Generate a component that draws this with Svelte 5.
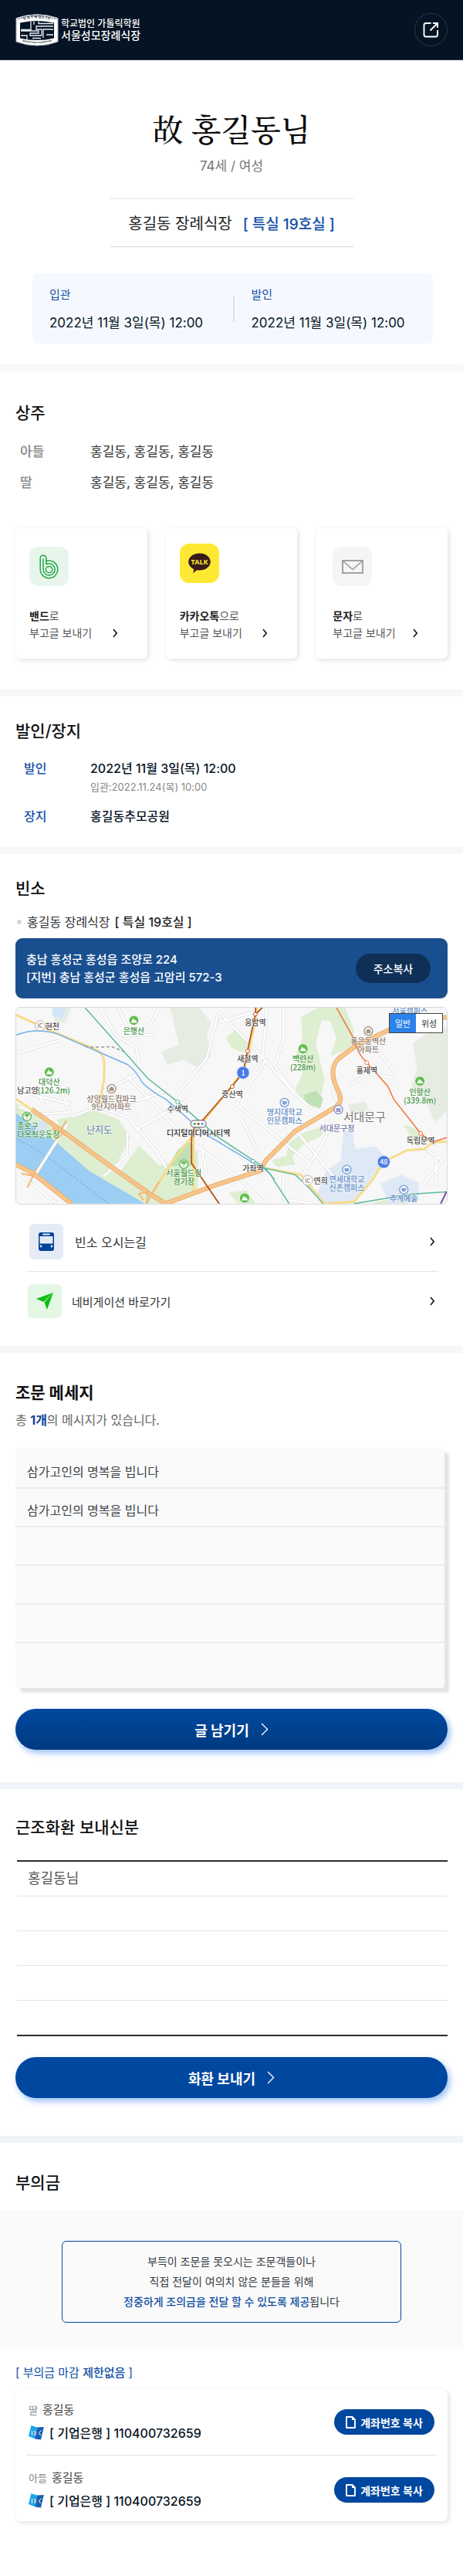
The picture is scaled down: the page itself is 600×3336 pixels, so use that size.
<script>
  const mourners = [
    { role: '아들', names: '홍길동, 홍길동, 홍길동' },
    { role: '딸', names: '홍길동, 홍길동, 홍길동' }
  ];
  const messages = ['삼가고인의 명복을 빕니다', '삼가고인의 명복을 빕니다', '', '', '', ''];
  const wreaths = ['홍길동님', '', '', '', ''];
  const accounts = [
    { role: '딸', name: '홍길동', bank: '기업은행', number: '110400732659' },
    { role: '아들', name: '홍길동', bank: '기업은행', number: '110400732659' }
  ];

  let mapType = $state('일반');

  const mapLabels = [
    { x: 47, y: 24, t: '현천', k: 'dark' },
    { x: 153, y: 30, t: '은행산', k: 'green' },
    { x: 311, y: 19, t: '응암역', k: 'dark' },
    { x: 301, y: 66, t: '새절역', k: 'dark' },
    { x: 281, y: 112, t: '증산역', k: 'dark' },
    { x: 373, y: 66, t: '백련산', k: 'green' },
    { x: 373, y: 77, t: '(228m)', k: 'green' },
    { x: 458, y: 43, t: '홍은동벽산', k: 'brown' },
    { x: 458, y: 54, t: '아파트', k: 'brown' },
    { x: 456, y: 81, t: '홍제역', k: 'dark' },
    { x: 525, y: 109, t: '인왕산', k: 'green' },
    { x: 525, y: 120, t: '(339.8m)', k: 'green' },
    { x: 43, y: 96, t: '대덕산', k: 'green' },
    { x: 49, y: 107, t: '(126.2m)', k: 'green' },
    { x: 15, y: 107, t: '남고양', k: 'dark' },
    { x: 124, y: 118, t: '상암월드컵파크', k: 'brown' },
    { x: 124, y: 129, t: '9단지아파트', k: 'brown' },
    { x: 210, y: 132, t: '수색역', k: 'dark' },
    { x: 237, y: 163, t: '디지털미디어시티역', k: 'black' },
    { x: 349, y: 136, t: '명지대학교', k: 'blue' },
    { x: 349, y: 147, t: '인문캠퍼스', k: 'blue' },
    { x: 453, y: 142, t: '서대문구', k: 'district' },
    { x: 417, y: 157, t: '서대문구청', k: 'violet' },
    { x: 108, y: 159, t: '난지도', k: 'island' },
    { x: 15, y: 154, t: '종로구', k: 'green' },
    { x: 29, y: 165, t: '다목적운동장', k: 'green' },
    { x: 218, y: 215, t: '서울월드컵', k: 'green' },
    { x: 218, y: 226, t: '경기장', k: 'green' },
    { x: 308, y: 209, t: '가좌역', k: 'dark' },
    { x: 396, y: 225, t: '연희', k: 'dark' },
    { x: 430, y: 223, t: '연세대학교', k: 'blue' },
    { x: 430, y: 234, t: '신촌캠퍼스', k: 'blue' },
    { x: 526, y: 173, t: '독립문역', k: 'dark' },
    { x: 504, y: 248, t: '추계예술', k: 'blue' },
    { x: 512, y: 4, t: '서울캠퍼스', k: 'blue' }
  ];
  const peaks = [[153, 17], [373, 54], [525, 96], [43, 84], [297, 248]];
  const parks = [[14, 142], [218, 204]];
  const schools = [[349, 124], [430, 211], [504, 237]];
  const homes = [[458, 31], [124, 106]];
  const stations = [
    [311, 9, '#b5551d'], [301, 57, '#b5551d'], [281, 103, '#b5551d'],
    [210, 123, '#58b795'], [308, 200, '#58b795'],
    [456, 72, '#f2733a'], [526, 164, '#f2733a']
  ];
</script>

{#snippet chevron()}
  <svg class="chev" width="7" height="12" viewBox="0 0 7 12" aria-hidden="true">
    <path d="M1 1 L5.2 6 L1 11" fill="none" stroke="#111" stroke-width="1.6" />
  </svg>
{/snippet}

{#snippet thinChevron()}
  <svg width="10" height="17" viewBox="0 0 10 17" aria-hidden="true">
    <path d="M1 1 L8.6 8.5 L1 16" fill="none" stroke="#fff" stroke-width="1.3" />
  </svg>
{/snippet}

<div class="page">
  <header class="top">
    <a class="brand" href="#home">
      <svg width="56" height="42" viewBox="0 0 56 42" aria-hidden="true">
        <defs>
          <path id="arcTop" d="M8 8.3 Q28 2.6 48 8.3" />
          <path id="arcBottom" d="M5.5 34.6 Q28 41.4 50.5 34.6" />
        </defs>
        <path d="M1 5.5 Q28 -4 55 5.5 V36 Q28 46 1 36 Z" fill="#fff" stroke="#aab3bd" stroke-width="1" />
        <path d="M2.5 6.8 Q28 -2 53.5 6.8" fill="none" stroke="#051424" stroke-width=".5" />
        <path d="M6 11.5 Q28 6.5 50 11.5 V31.5 Q28 36.5 6 31.5 Z" fill="#051424" />
        <path d="M20 10 V20.5 H7 M30 9.5 V12.5 H49 M49 16 H27 V20 H34 V28 H19 V25 H30 V22 H7 M24 10 V14 M7 28 H15 V33 M36 31 V20 H49 M40 27 H49 M22 31.5 H33" fill="none" stroke="#e9edf1" stroke-width="1.3" />
        <text class="seal"><textPath href="#arcTop" startOffset="50%" text-anchor="middle">C A T H O L I C</textPath></text>
        <text class="seal small"><textPath href="#arcBottom" startOffset="50%" text-anchor="middle">EDUCATION FOUNDATION</textPath></text>
      </svg>
      <span class="brand-text"><span class="l1">학교법인 가톨릭학원</span><span class="l2">서울성모장례식장</span></span>
    </a>
    <button class="share" aria-label="공유">
      <svg width="21" height="21" viewBox="0 0 21 21" aria-hidden="true">
        <path d="M10.5 2 H4 Q1.5 2 1.5 4.5 V17 Q1.5 19.5 4 19.5 H16.5 Q19 19.5 19 17 V11" fill="none" stroke="#fff" stroke-width="1.9" />
        <path d="M9.5 11.5 L18 3 M13 2 H19 V8" fill="none" stroke="#fff" stroke-width="1.9" />
      </svg>
    </button>
  </header>

  <main>
    <section class="hero">
      <h1>故 홍길동님</h1>
      <p class="age">74세 / 여성</p>
      <p class="room"><span>홍길동 장례식장</span><strong>[ 특실 19호실 ]</strong></p>
      <dl class="schedule">
        <div><dt>입관</dt><dd>2022년 11월 3일(목) 12:00</dd></div>
        <div><dt>발인</dt><dd>2022년 11월 3일(목) 12:00</dd></div>
      </dl>
    </section>

    <section class="family">
      <h2>상주</h2>
      <dl class="mourners">
        {#each mourners as m}
          <div><dt>{m.role}</dt><dd>{m.names}</dd></div>
        {/each}
      </dl>
      <div class="cards">
        <a class="card" href="#band">
          <span class="ico band">
            <svg width="25" height="32" viewBox="0 0 25 32" aria-hidden="true">
              <g fill="none" stroke="#1fa64a" stroke-width="1.5">
                <path d="M1.2 19.5 V5 A3.8 3.8 0 0 1 8.800 5 V8.700 A11.300 11.300 0 1 1 1.200 19.500 Z" />
                <path d="M8.800 8.500 V13" />
                <path d="M5 19.500 V5.500 M5 19.500 A7.600 7.600 0 1 0 8.800 12.800" />
                <circle cx="12.600" cy="19.600" r="4.200" />
              </g>
            </svg>
          </span>
          <span class="copy"><b>밴드</b>로<br />부고글 보내기</span>
          {@render chevron()}
        </a>
        <a class="card kakao-card" href="#kakao">
          <span class="ico kakao">
            <svg width="29" height="27" viewBox="0 0 29 27" aria-hidden="true">
              <path d="M14.5 .5 C22.5 .5 28.8 5.3 28.8 11.5 C28.8 17.7 22.5 22.5 14.5 22.5 C13.3 22.5 12.2 22.4 11.2 22.2 L6.2 26.3 L7.2 21 C3 19 .2 15.5 .2 11.5 C.2 5.3 6.5 .5 14.5 .5 Z" fill="#391b1b" />
              <text x="14.5" y="15" text-anchor="middle" class="talk">TALK</text>
            </svg>
          </span>
          <span class="copy"><b>카카오톡</b>으로<br />부고글 보내기</span>
          {@render chevron()}
        </a>
        <a class="card sms-card" href="#sms">
          <span class="ico sms">
            <svg width="28" height="18" viewBox="0 0 28 18" aria-hidden="true">
              <rect x="1" y="1" width="26" height="16" fill="none" stroke="#999" stroke-width="1.8" />
              <path d="M2 2 L14 12.5 L26 2" fill="none" stroke="#999" stroke-width="1.5" />
            </svg>
          </span>
          <span class="copy"><b>문자</b>로<br />부고글 보내기</span>
          {@render chevron()}
        </a>
      </div>
    </section>

    <section class="burial">
      <h2>발인/장지</h2>
      <dl>
        <div><dt>발인</dt><dd>2022년 11월 3일(목) 12:00<small>입관:2022.11.24(목) 10:00</small></dd></div>
        <div><dt>장지</dt><dd>홍길동추모공원</dd></div>
      </dl>
    </section>

    <section class="place">
      <h2>빈소</h2>
      <p class="where"><i></i><span>홍길동 장례식장</span><b>[ 특실 19호실 ]</b></p>
      <div class="address">
        <p>충남 홍성군 홍성읍 조양로 224<br />[지번] 충남 홍성군 홍성읍 고암리 572-3</p>
        <button>주소복사</button>
      </div>

      <div class="map">
        <svg viewBox="0 0 560 256" preserveAspectRatio="xMidYMid slice" role="img" aria-label="빈소 지도">
          <rect width="560" height="256" fill="#f7f7f7" />
          <g transform="matrix(.3827 0 0 .3333 -20 -14)">
            <g fill="#e7ece3">
              <path d="M575 42 h100 l40 60 l-15 50 l15 80 l-40 50 l-55 -35 l-55 20 l-20 -50 l60 -30 z" />
              <path d="M1400 180 l80 -60 l35 0 v330 l-40 40 l-30 -80 l-50 -60 l20 -70 z" />
              <path d="M1180 420 l60 -10 l10 30 l-60 20 z M180 42 h60 l-20 60 l-40 0 z" />
            </g>
            <g fill="#ddeed1">
              <path d="M1020 80 l60 -38 h90 l30 90 l-10 70 l-70 30 l20 -70 l-20 -65 l-30 -5 l-20 90 l30 140 l-10 60 l-60 30 l-30 -50 l25 -60 l-20 -80 l20 -60 z" />
              <path d="M765 160 l30 -28 l50 40 l-20 48 l-40 -20 z" />
              <path d="M190 480 L320 445 L400 480 L440 550 L390 660 L330 640 L215 540 Z" />
              <path d="M52 415 L100 445 L215 545 L410 700 L560 808 H480 L300 690 L180 580 L52 460 Z" />
              <path d="M400 690 L470 580 L540 660 L600 640 L670 600 V750 L560 808 L500 760 Z" />
              <path d="M920 640 l50 -20 l10 -50 l50 -40 l70 -25 l-10 40 l-60 30 l-40 50 l10 30 l-60 10 z" />
              <path d="M1370 500 l50 20 l30 40 l-50 10 z M775 765 l60 -10 l30 52 h-60 z M1250 808 l60 -15 l60 -5 l10 20 z" />
            </g>
            <path d="M1030 385 l40 -18 l25 30 l-10 40 l-50 -20 z M600 600 L655 545 V660 L570 662 Z" fill="#bfe0b4" />
            <path d="M1165 525 l30 0 l10 70 l70 -10 l30 40 l-60 110 l-60 75 h-80 l-30 -40 l30 -90 l50 -40 z M1290 730 l70 -35 l60 30 v70 l-100 15 z" fill="#dfe9f5" />
            <path d="M52 455 L180 560 L300 680 L490 808 H240 L52 655 Z" fill="#9ccdf2" />
            <path d="M100 490 l50 -5 l10 60 l-30 5 z M175 42 h50 l-15 45 l-35 -10 z" fill="#d4e6f6" />
            <path d="M52 555 Q100 580 150 620 T300 750 T380 808" fill="none" stroke="#5f8fb8" stroke-dasharray="2 3" vector-effect="non-scaling-stroke" />

            {#each [['#dcdde0', 4], ['#fff', 2.6]] as [color, w]}
              <g class="line" stroke={color} stroke-width={w}>
                <path d="M190 808 L60 690 M120 690 L225 500 M335 42 L390 150 L460 200 L470 260 M400 42 L440 150 L520 150 M540 42 L500 130 M60 220 L200 170 M740 60 L700 240 L600 380 M740 60 L860 200 L1000 380 L1060 440" />
                <path d="M905 42 L890 230 L820 330 M960 42 L960 170 L930 270 L1000 380 M860 60 L740 100 M1130 300 L1130 380 L1150 420" />
                <path d="M240 470 L330 430 L430 470 L520 590 L580 700 M430 310 L560 470 L640 560 L800 700 L900 808 M330 380 L470 300 M400 430 L560 370 M460 520 L640 400 M350 350 L470 480" />
                <path d="M60 430 L130 460 L240 450 M100 380 L240 420 M120 350 L150 440 M200 350 L230 440 M680 570 L700 700 M820 480 L870 600 M700 520 L900 700 M900 250 L800 420 L1050 650 M960 690 L960 790 L1060 808" />
                <path d="M1000 520 L1130 700 M1140 430 L1100 560 L1000 740 M1180 350 L1250 300 L1340 320 M1260 180 L1340 300 M1400 560 L1500 640 L1430 740 M1480 620 V740 M430 530 L430 620 L350 700" />
              </g>
            {/each}
            <g class="line" stroke="#f8dc8c" stroke-width="3">
              <path d="M52 72 L180 138 L320 205 Q352 220 352 270 L350 330 L335 420" />
              <path d="M872 42 L845 210 L825 290 L690 485 L640 560 L570 665 L520 760" />
              <path d="M52 400 L110 445 M655 545 V760 M880 665 L1020 695 L1100 808 L1200 800 L1260 720 L1300 645 L1380 600 L1440 595 L1465 570 L1515 565" />
            </g>
            {#each [['#e3a765', 6], ['#f8c48a', 4.5]] as [color, w]}
              <g class="line" stroke={color} stroke-width={w}>
                <path d="M105 440 L215 530 L340 635 L500 765 L560 808 M52 655 L110 690 L240 808 M560 808 L730 735 L880 680 L900 640 L1000 525 L1140 430 Q1165 405 1145 365 Q1110 280 1150 240 L1210 190 L1320 130 L1515 80" />
              </g>
            {/each}
            <g class="line" stroke="#f2b878" stroke-width="2">
              <path d="M222 485 L185 560 L215 530 L175 515 M125 665 L90 745 L110 700 L70 690 M538 720 L495 808 L500 760 L470 770 L485 795" />
            </g>
            <g class="line" stroke-width="1.5">
              <path d="M52 150 Q120 120 190 145 L430 265 Q460 290 480 335 Q510 370 560 400 L700 540 L860 650 Q910 675 930 715" stroke="#6fb0ea" />
              <path d="M285 42 L500 320 L600 410 L740 550 L860 640 Q910 670 930 720 L980 808 M880 665 L1000 695 Q1050 745 1095 808 M1200 808 L1400 770 L1515 762" stroke="#5dba9a" />
              <path d="M285 195 Q340 200 375 195 L420 215" stroke="#999" stroke-dasharray="4 3" />
              <path d="M890 42 L865 70 M866 42 L865 70 L838 213 L823 297 L786 350 L680 490 Q648 510 648 560 V650 L742 808" stroke="#b5551d" stroke-width="1.8" />
              <path d="M1140 42 L1200 165 Q1210 220 1243 257 L1315 350 L1335 400 L1427 534 L1465 568 L1515 550" stroke="#f2733a" />
              <path d="M1515 760 L1495 808" stroke="#7a4bc0" stroke-width="2" />
            </g>
          </g>

          {#each stations as [x, y, c]}
            <circle cx={x} cy={y} r="2.5" fill="#fff" stroke={c} stroke-width="1" />
          {/each}
          {#each peaks as [x, y]}
            <circle cx={x} cy={y} r="6" fill="#5fbd4f" />
            <path d="M{x - 4} {y + 3} l3 -6 l2 3 l1 -1 l2.5 4 z" fill="#fff" />
          {/each}
          {#each parks as [x, y]}
            <circle cx={x} cy={y} r="5.5" fill="#fff" stroke="#69b95c" stroke-width="1.5" />
            <path d="M{x - 3} {y - 1} a3 2.5 0 0 1 6 0 z M{x} {y - 1} v4" fill="#69b95c" stroke="#69b95c" />
          {/each}
          {#each schools as [x, y]}
            <circle cx={x} cy={y} r="5.5" fill="#fff" stroke="#7da5d8" stroke-width="1.5" />
            <path d="M{x - 3} {y - 2} h6 v3 q-3 4 -6 0 z" fill="#7da5d8" />
          {/each}
          {#each homes as [x, y]}
            <circle cx={x} cy={y} r="5.5" fill="#fff" stroke="#a89585" stroke-width="1.5" />
            <path d="M{x - 3} {y + 3} v-4 l3 -2 l3 2 v4 z" fill="#a89585" />
          {/each}
          <circle cx="419" cy="133" r="5.5" fill="#fff" stroke="#9a9ccd" stroke-width="1.5" />
          <rect x="416" y="131" width="6" height="5" fill="#9a9ccd" />

          {#each mapLabels as l}
            <text x={l.x} y={l.y} class="lab {l.k}">{l.t}</text>
          {/each}

          {#each [[31, 24], [379, 225]] as [x, y]}
            <circle cx={x} cy={y} r="6.5" fill="#fff" stroke="#b9aca0" />
            <text {x} {y} class="lab ic">IC</text>
          {/each}
          <circle cx="295" cy="85" r="8" fill="#4a78e6" stroke="#b6c9f5" />
          <text x="295" y="85" class="lab num">1</text>
          <circle cx="478" cy="201" r="8" fill="#4a78e6" stroke="#b6c9f5" />
          <text x="478" y="201" class="lab num">48</text>
          <rect x="227" y="147" width="20" height="9" rx="4.5" fill="#fff" stroke="#555" />
          <circle cx="232" cy="151.5" r="1.6" fill="#3fae86" />
          <circle cx="237" cy="151.5" r="1.6" fill="#b5551d" />
          <circle cx="242" cy="151.5" r="1.6" fill="#4e9de2" />
        </svg>
        <div class="maptype">
          {#each ['일반', '위성'] as t}
            <button class:on={mapType === t} onclick={() => (mapType = t)}>{t}</button>
          {/each}
        </div>
      </div>

      <nav class="links">
        <a href="#route">
          <span class="tile bus">
            <svg width="20" height="24" viewBox="0 0 20 24" aria-hidden="true">
              <rect x="0" y="0" width="20" height="24" rx="3" fill="#00439a" />
              <rect x="5" y="1.5" width="10" height="2" rx="1" fill="#e4ebf4" />
              <rect x="1.5" y="5" width="17" height="9.5" fill="#e4ebf4" />
              <circle cx="3" cy="18" r="1.4" fill="#e4ebf4" />
              <circle cx="17" cy="18" r="1.4" fill="#e4ebf4" />
            </svg>
          </span>
          <span>빈소 오시는길</span>
          {@render chevron()}
        </a>
        <a class="second" href="#navi">
          <span class="tile nav">
            <svg width="22" height="22" viewBox="0 0 22 22" aria-hidden="true">
              <path d="M22 0 L0 8 L9.5 12 Z" fill="#0cbf12" />
              <path d="M22 0 L10.5 12.5 L14 22 Z" fill="#0cbf12" />
            </svg>
          </span>
          <span>네비게이션 바로가기</span>
          {@render chevron()}
        </a>
      </nav>
    </section>

    <section class="messages">
      <h2>조문 메세지</h2>
      <p class="count">총 <b>1개</b>의 메시지가 있습니다.</p>
      <ul class="notes">
        {#each messages as m}<li>{m}</li>{/each}
      </ul>
      <button class="cta gradient">글 남기기 {@render thinChevron()}</button>
    </section>

    <section class="wreaths">
      <h2>근조화환 보내신분</h2>
      <ul class="senders">
        {#each wreaths as w}<li>{w}</li>{/each}
      </ul>
      <button class="cta">화환 보내기 {@render thinChevron()}</button>
    </section>

    <section class="money">
      <h2>부의금</h2>
      <div class="notice">
        <p>부득이 조문을 못오시는 조문객들이나<br />직접 전달이 여의치 않은 분들을 위해<br /><b>정중하게 조의금을 전달 할 수 있도록 제공</b>됩니다</p>
      </div>
      <p class="deadline">[ 부의금 마감 <b>제한없음</b> ]</p>
      <ul class="accounts">
        {#each accounts as a}
          <li>
            <div class="who">
              <p class="name"><small>{a.role}</small>{a.name}</p>
              <p class="acct">
                <svg width="20" height="19" viewBox="0 0 20 19" aria-hidden="true">
                  <path d="M3.5 0 L11 2.5 L9 17.5 L0 14 Z" fill="#1aa7e8" />
                  <path d="M11 2.5 L19.8 2 L16 18.5 L8.5 17.5 Z" fill="#1660b4" />
                  <path d="M4.5 7 V13" stroke="#fff" stroke-width="1" />
                  <path d="M8 7 Q11.5 10 8 13 Z" fill="#e6452f" stroke="#fff" stroke-width=".8" />
                  <path d="M16.5 6.5 L13.5 9.5 L15.5 13" fill="none" stroke="#fff" stroke-width="1" />
                </svg>
                [ {a.bank} ] {a.number}
              </p>
            </div>
            <button class="copybtn">
              <svg width="13" height="16" viewBox="0 0 13 16" aria-hidden="true">
                <path d="M1 1 H8.5 L12 4.5 V15 H1 Z" fill="none" stroke="#fff" stroke-width="1.9" stroke-linejoin="round" />
                <path d="M8 1 V5 H12 Z" fill="#fff" />
              </svg>
              계좌번호 복사
            </button>
          </li>
        {/each}
      </ul>
    </section>
  </main>
</div>

<style>
  :global(body) { margin: 0; background: #fff; }
  .page {
    font-family: Inter, "Noto Sans CJK KR", sans-serif;
    color: #222;
    font-size: 16px;
  }
  .page :is(h1, h2, p, dl, dd, ul) { margin: 0; padding: 0; }
  ul { list-style: none; }
  a { color: inherit; text-decoration: none; }
  button { font: inherit; border: 0; padding: 0; cursor: pointer; }
  svg { flex: none; }

  .top {
    display: flex;
    justify-content: space-between;
    align-items: center;
    height: 77px;
    padding: 0 20px;
    background: #051424;
    border-bottom: 1px solid #2c3a48;
  }
  .brand { display: flex; align-items: center; gap: 3px; color: #fff; }
  .brand-text { display: flex; flex-direction: column; font-weight: 500; }
  .l1 { font-size: 12px; line-height: 14px; }
  .l2 { font-size: 14px; line-height: 16px; }
  .seal { font: 700 5px "Liberation Sans", sans-serif; fill: #051424; }
  .seal.small { font-size: 3px; }
  .share {
    display: grid;
    place-items: center;
    width: 43px;
    height: 43px;
    border: 1px solid #2c3946;
    border-radius: 50%;
    background: none;
    box-sizing: border-box;
  }

  section { padding: 30px 20px 0; border-bottom: 9px solid #f7f7f7; }
  h2 { font-size: 21px; line-height: 30px; font-weight: 500; color: #111; }

  .hero { padding: 58px 20px 27px; text-align: center; }
  h1 {
    font-family: "Noto Serif CJK KR", "Noto Sans CJK KR", serif;
    font-size: 40px;
    line-height: 60px;
    font-weight: 500;
    color: #0b0b0b;
  }
  .hero .age { margin-top: 7px; font-size: 17px; line-height: 24px; color: #777; }
  .hero .room {
    display: flex;
    justify-content: center;
    align-items: center;
    gap: 14px;
    max-width: 315px;
    height: 61px;
    margin: 30px auto 0;
    border-top: 1px solid #e2e4e7;
    border-bottom: 1px solid #cfd9e6;
    font-size: 20px;
    white-space: nowrap;
  }
  .room strong { font-size: 19px; font-weight: 500; color: #0f4ea3; }
  .hero .schedule {
    display: grid;
    grid-template-columns: 1fr 1fr;
    align-items: center;
    height: 91px;
    margin: 34px 19px 0 22px;
    border-radius: 6px;
    background: #f5f9ff;
    text-align: left;
  }
  .schedule div { padding-left: 22px; }
  .schedule div + div { border-left: 2px solid #d8e2f1; height: 34px; display: flex; flex-direction: column; justify-content: center; }
  .schedule dt { font-size: 15px; line-height: 24px; margin-bottom: 12px; color: #1750a5; }
  .schedule dd { font-size: 17px; line-height: 24px; font-weight: 400; color: #071424; white-space: nowrap; }

  .family { padding-top: 39px; padding-bottom: 40px; }
  .family .mourners { margin-top: 15px; font-size: 17px; line-height: 40px; }
  .mourners div { display: grid; grid-template-columns: 91px 1fr; padding-left: 6px; }
  .mourners dt { color: #888; font-weight: 500; }
  .mourners dd { color: #333; }
  .cards { display: grid; grid-template-columns: repeat(3, 1fr); gap: 24px; margin-top: 39px; }
  .card {
    display: grid;
    grid-template-columns: 1fr auto;
    grid-template-rows: auto 1fr;
    height: 169px;
    padding: 24px 38px 22px 18px;
    box-sizing: border-box;
    border-radius: 6px;
    background: #fff;
    box-shadow: 2px 2px 6px rgba(0, 0, 0, .12);
  }
  .kakao-card { padding-top: 20px; }
  .sms-card { padding-left: 22px; }
  .ico {
    display: grid;
    place-items: center;
    grid-column: 1 / -1;
    width: 51px;
    height: 51px;
    border-radius: 12px;
  }
  .band { background: #e8f5eb; }
  .kakao { background: #fde933; }
  .sms { background: #f5f5f5; }
  .talk { font: 700 9px "Noto Sans", sans-serif; fill: #fde933; }
  .copy { align-self: end; font-size: 14px; line-height: 22px; color: #555; white-space: nowrap; }
  .copy b { color: #222; font-weight: 700; }
  .card .chev { align-self: end; margin-bottom: 5px; }

  .burial { padding-bottom: 27px; }
  .burial dl { display: grid; gap: 14px; margin-top: 20px; line-height: 26px; font-size: 16px; font-weight: 500; }
  .burial dl div { display: grid; grid-template-columns: 86px 1fr; padding-left: 11px; }
  .burial dt { color: #1750a5; }
  .burial dd { color: #071424; }
  .burial small { display: block; font-size: 13px; line-height: 22px; font-weight: 400; color: #888; }

  .place { padding-bottom: 36px; }
  .place .where { display: flex; align-items: center; margin-top: 15px; line-height: 26px; color: #333; }
  .where i { width: 6px; height: 6px; margin: 0 7px 0 2px; border-radius: 50%; background: #d5d5d5; }
  .where b { margin-left: 6px; font-weight: 500; color: #222; }
  .address {
    display: flex;
    justify-content: space-between;
    align-items: center;
    height: 78px;
    margin-top: 8px;
    padding: 0 22px 0 14px;
    border-radius: 9px;
    background: #1a4f8f;
    color: #fff;
  }
  .address p { font-size: 15px; line-height: 23px; font-weight: 500; }
  .address button { width: 97px; height: 38px; border-radius: 19px; background: #0f2f57; color: #fff; font-size: 14px; font-weight: 500; }

  .map {
    position: relative;
    height: 254px;
    margin-top: 11px;
    border: 1px solid #d9d9d9;
    border-radius: 6px;
    overflow: hidden;
  }
  .map svg { display: block; width: 100%; height: 100%; }
  .line path { fill: none; vector-effect: non-scaling-stroke; }
  .lab {
    font-family: "Noto Sans CJK KR", sans-serif;
    font-size: 10px;
    font-weight: 500;
    text-anchor: middle;
    dominant-baseline: central;
    paint-order: stroke;
    stroke: rgba(255, 255, 255, .8);
    stroke-width: 1px;
  }
  .dark { fill: #4a4542; }
  .black { fill: #222; }
  .green { fill: #3f9440; }
  .brown { fill: #8c7766; }
  .blue { fill: #5f8ac4; }
  .violet { fill: #6f74a8; }
  .island { fill: #6f8fb3; font-size: 12px; }
  .district { fill: #777; font-size: 15px; font-weight: 400; }
  .ic { fill: #7b6a5c; font-size: 7px; }
  .num { fill: #fff; stroke: none; font-size: 9px; }
  .maptype {
    position: absolute;
    top: 7px;
    right: 5px;
    display: grid;
    grid-template-columns: 1fr 1fr;
    width: 68px;
    height: 24px;
    border: 1px solid #444;
  }
  .maptype button { background: #fff; color: #333; font-size: 11px; }
  .maptype button.on { background: #2b82ea; color: #fff; }

  .links a { display: flex; align-items: center; margin: 0 12px 0 14px; padding: 25px 4px 15px 4px; border-bottom: 1px solid #e4e4e6; color: #333; }
  .links .second { padding: 16px 4px 0 2px; border-bottom: 0; font-size: 15px; }
  .links .chev { margin-left: auto; }
  .tile { display: grid; place-items: center; width: 44px; height: 46px; margin-right: 15px; border-radius: 6px; }
  .bus { background: #e4ebf4; }
  .nav { height: 44px; margin-right: 13px; background: #e3f7e4; }

  .messages { padding-top: 37px; padding-bottom: 42px; border-color: #f0f4f8; }
  .messages h2 { font-weight: 700; }
  .messages .count { margin-top: 8px; line-height: 24px; color: #666; }
  .count b { color: #0d429c; font-weight: 700; }
  .messages .notes {
    margin: 24px 4px 27px 0;
    padding-top: 3px;
    border-radius: 4px;
    background: #f9fafc;
    box-shadow: 6px 6px 3px #e5e5e5;
    color: #444;
  }
  .notes li { height: 48px; padding: 0 15px; line-height: 56px; border-bottom: 2px solid #ebedef; }
  .notes li:last-child { height: 58px; border: 0; }

  .cta {
    display: flex;
    justify-content: center;
    align-items: center;
    gap: 15px;
    width: 100%;
    height: 53px;
    border-radius: 27px;
    background: #00479f;
    color: #fff;
    font-size: 18px;
    font-weight: 700;
    box-shadow: 3px 4px 9px rgba(0, 98, 230, .42);
  }
  .gradient { background: linear-gradient(#0049a0, #003a80); }

  .wreaths { padding-top: 35px; padding-bottom: 49px; border-color: #f0f4f8; }
  .wreaths .senders { margin: 27px 0; padding: 0 0 0 2px; }
  .senders li { height: 44px; padding-left: 14px; border-bottom: 1px solid #e4e4e4; font-size: 18px; line-height: 43px; color: #555; }
  .senders li:first-child { border-top: 2px solid #2c2c2c; }
  .senders li:last-child { border-bottom: 2px solid #2c2c2c; }

  .money { padding: 37px 0 70px; border: 0; }
  .money h2 { padding: 0 20px; }
  .notice { margin-top: 20px; padding: 40px 80px 33px; background: #fafafa; }
  .notice p {
    padding: 13px 0;
    border: 1px solid #00479f;
    border-radius: 6px;
    font-size: 14px;
    line-height: 26px;
    text-align: center;
    color: #333a45;
  }
  .notice b { color: #0f4ea3; font-weight: 500; }
  .money .deadline { margin: 20px 20px 0; font-size: 15px; line-height: 24px; color: #0f4ea3; }
  .deadline b { font-weight: 500; }
  .money .accounts { margin: 9px 20px 0; padding: 0 14px; border-radius: 7px; box-shadow: 2px 2px 6px rgba(0, 0, 0, .12); }
  .accounts li { display: flex; justify-content: space-between; align-items: center; height: 85px; padding: 0 3px; }
  .accounts li + li { height: 81px; padding-top: 4px; border-top: 1px solid #e0e2e5; }
  .who { display: grid; gap: 4px; }
  .name { font-size: 15px; line-height: 24px; color: #444; }
  .name small { margin-right: 6px; font-size: 13px; color: #888; }
  .acct { display: flex; align-items: center; gap: 7px; line-height: 28px; font-weight: 500; color: #071424; }
  .copybtn {
    display: flex;
    align-items: center;
    justify-content: center;
    gap: 6px;
    width: 130px;
    height: 33px;
    border-radius: 17px;
    background: #00479f;
    color: #fff;
    font-size: 14px;
    font-weight: 700;
  }
</style>
